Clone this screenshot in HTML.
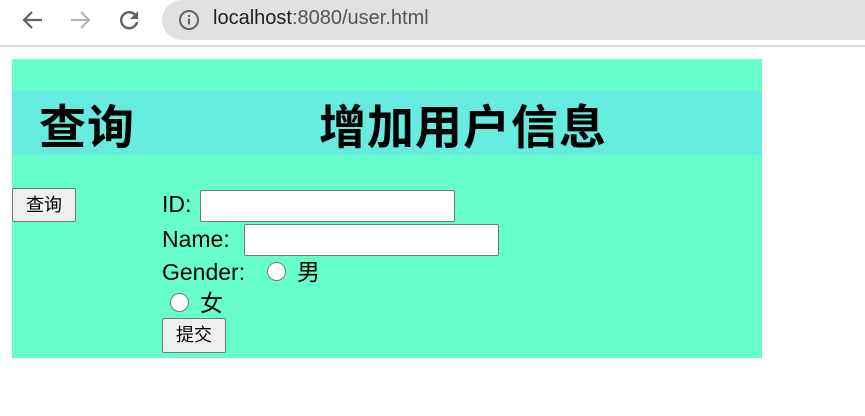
<!DOCTYPE html>
<html><head><meta charset="utf-8"><style>
*{margin:0;padding:0;box-sizing:border-box}
body{width:865px;height:416px;background:#fff;position:relative;overflow:hidden;font-family:"Liberation Sans","Noto Sans CJK SC",sans-serif}
.a{position:absolute}
.bar{left:162px;top:0;width:720px;height:40px;background:#e0e0e0;border-radius:20px 0 0 20px}
.url{left:213px;top:7px;font-size:20px;color:#555;white-space:nowrap}
.url b{font-weight:normal;color:#202124}
.line{left:0;top:45px;width:865px;height:2px;background:#dadada}
.box{left:12px;top:59px;width:750px;height:299px;background:#66ffcc}
.band{left:12px;top:91px;width:750px;height:64px;background:#66ebdf}
.h{font-size:47px;font-weight:bold;color:#000;top:94px;line-height:60px;font-family:"Noto Sans CJK SC",sans-serif;letter-spacing:1px}
.t{font-size:23px;color:#000;line-height:30px;white-space:nowrap;font-family:"Liberation Sans","Noto Sans CJK SC",sans-serif}
.btn{background:#efefef;border:1px solid #767676;border-radius:2px;font-size:18px;text-align:center;line-height:31px;font-family:"Noto Sans CJK SC",sans-serif}
.in{background:#fff;border:1px solid #767676;border-radius:2px}
.r{width:19px;height:19px;border:1px solid #767676;border-radius:50%;background:#fff}
</style></head><body>
<svg class="a" style="left:20px;top:8px" width="26" height="24" viewBox="0 0 26 24"><path d="M22 12H5M12 4L4 12l8 8" stroke="#5f6368" stroke-width="2.2" fill="none"/></svg>
<svg class="a" style="left:68px;top:8px" width="26" height="24" viewBox="0 0 26 24"><path d="M3 12h17M13 4l8 8-8 8" stroke="#b5b5b5" stroke-width="2.2" fill="none"/></svg>
<svg class="a" style="left:116px;top:7px" width="26" height="26" viewBox="0 0 26 26"><path d="M20 9A8 8 0 1 0 21 15" stroke="#5f6368" stroke-width="2.4" fill="none"/><path d="M22 4v8h-8z" fill="#5f6368"/></svg>
<div class="a bar"></div>
<svg class="a" style="left:178px;top:9px" width="22" height="22" viewBox="0 0 22 22"><circle cx="11" cy="11" r="9" stroke="#5f6368" stroke-width="2" fill="none"/><rect x="10" y="9.5" width="2" height="6" fill="#5f6368"/><rect x="10" y="6" width="2" height="2" fill="#5f6368"/></svg>
<div class="a url"><b>localhost</b>:8080/user.html</div>
<div class="a line"></div>
<div class="a box"></div>
<div class="a band"></div>
<div class="a h" style="left:39px">查询</div>
<div class="a h" style="left:319px">增加用户信息</div>
<div class="a btn" style="left:12px;top:188px;width:64px;height:34px">查询</div>
<div class="a t" style="left:162px;top:189px">ID:</div>
<div class="a in" style="left:200px;top:190px;width:255px;height:32px"></div>
<div class="a t" style="left:162px;top:224px">Name:</div>
<div class="a in" style="left:244px;top:224px;width:255px;height:32px"></div>
<div class="a t" style="left:162px;top:257px">Gender:</div>
<div class="a r" style="left:267px;top:262px"></div>
<div class="a t" style="left:297px;top:257px">男</div>
<div class="a r" style="left:170px;top:293px"></div>
<div class="a t" style="left:200px;top:288px">女</div>
<div class="a btn" style="left:162px;top:318px;width:64px;height:35px">提交</div>
</body></html>
